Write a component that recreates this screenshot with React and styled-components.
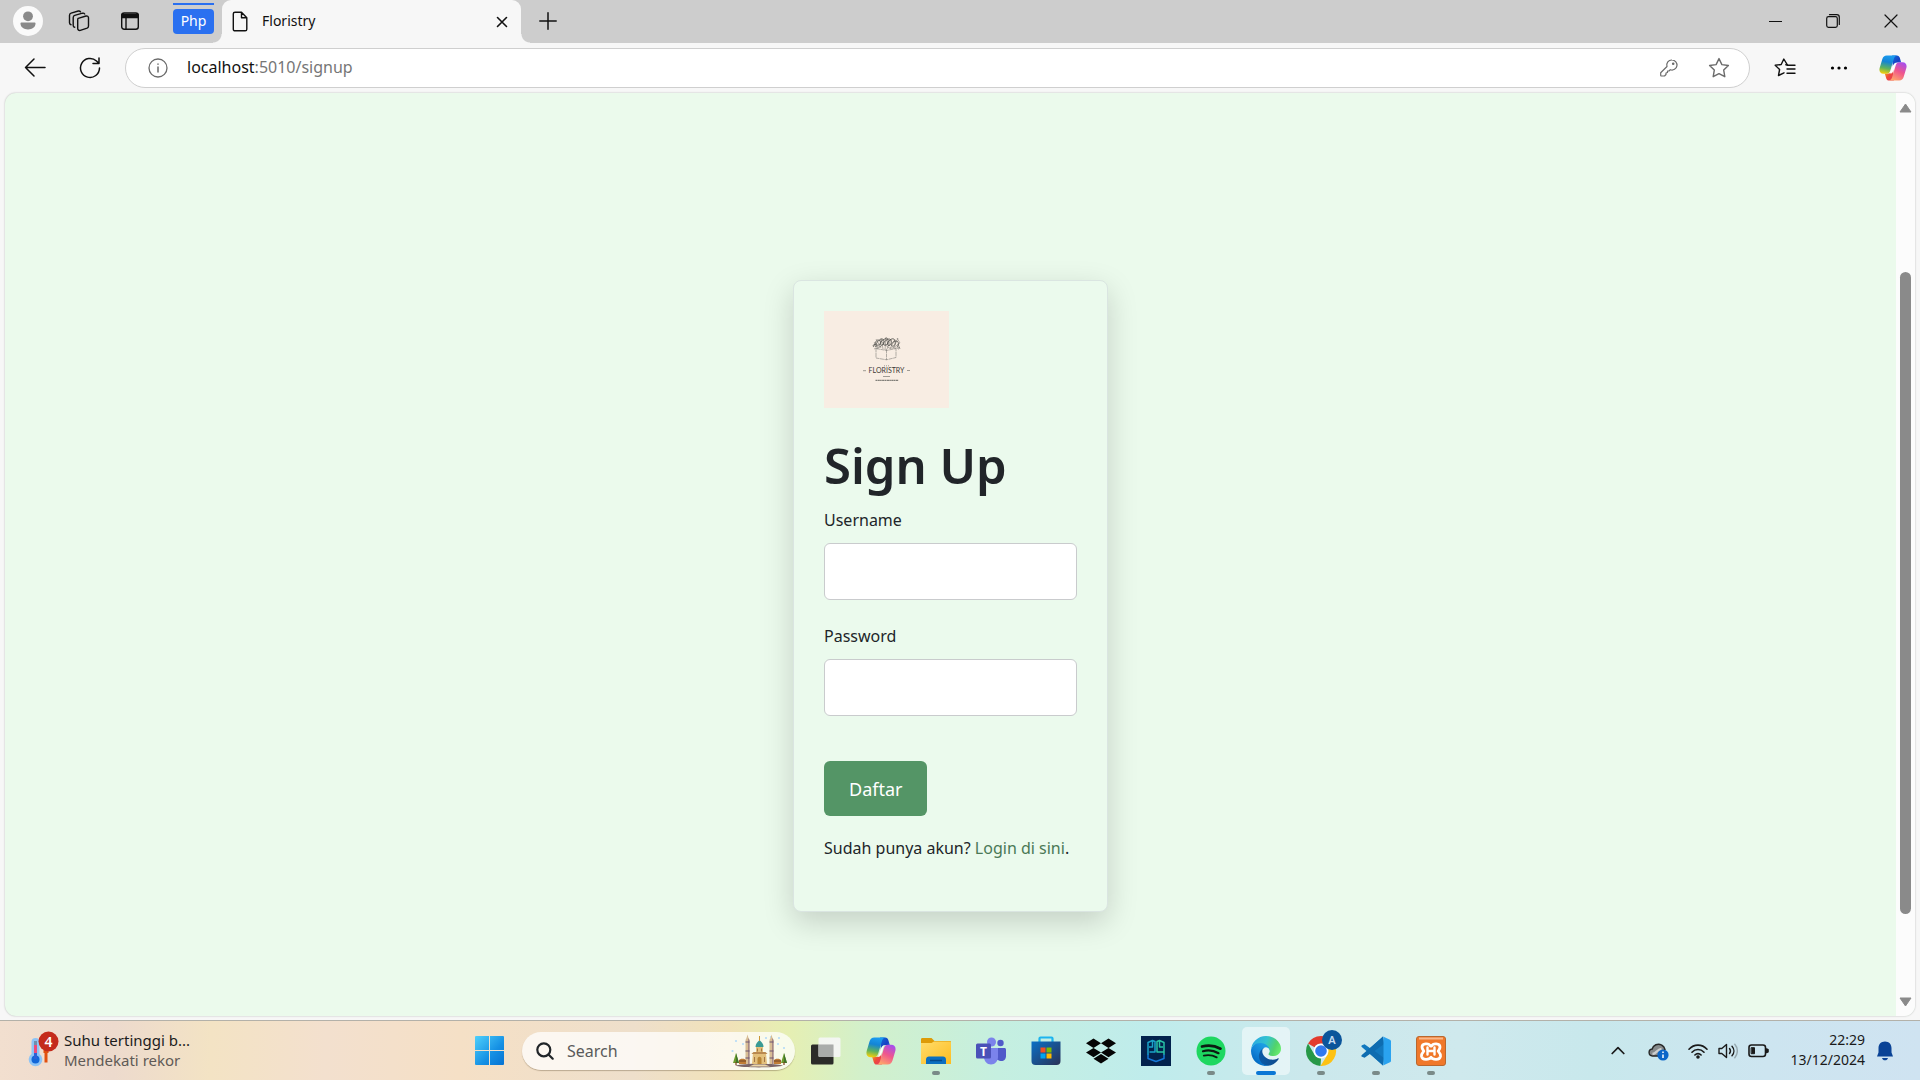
import React, { useId } from "react";
import styled, { createGlobalStyle, css } from "styled-components";

const GlobalStyle = createGlobalStyle`
  *, *::before, *::after { box-sizing: border-box; }
  body {
    margin: 0;
    font-family: "Segoe UI", "Noto Sans", "Open Sans", sans-serif;
    font-size: 16px;
    color: #212529;
  }
  button, input { font: inherit; color: inherit; }
  svg { display: block; flex: none; }
`;

const Desktop = styled.div`
  display: flex;
  flex-direction: column;
  height: 100vh;
  overflow: hidden;
  background: #f7f7f7;
`;

/* ---------- browser chrome ---------- */

const TitleBar = styled.header`
  display: flex;
  align-items: stretch;
  height: 43px;
  padding-left: 2px;
  background: #cdcdcd;
  color: #111;
`;

const BarButton = styled.button`
  display: flex;
  align-items: center;
  justify-content: center;
  width: ${(p) => p.$width || 51}px;
  height: 42px;
  padding: 0;
  border: 0;
  background: none;
`;

const TabGroup = styled.button`
  align-self: flex-start;
  width: 41px;
  height: 31px;
  margin: 3px 8px 0 18px;
  padding: 4px 0 0;
  border: 0;
  border-top: 2px solid #2a6fef;
  background: none;
`;

const TabGroupName = styled.span`
  display: block;
  height: 25px;
  border-radius: 4px;
  background: #2a70f0;
  color: #fff;
  font-size: 14px;
  line-height: 24px;
`;

const Tab = styled.div`
  position: relative;
  display: flex;
  align-items: center;
  width: 299px;
  height: 43px;
  padding: 0 8px 0 10px;
  border-radius: 9px 9px 0 0;
  background: #f7f7f7;
  font-size: 14px;

  &::before, &::after {
    content: "";
    position: absolute;
    bottom: 0;
    width: 9px;
    height: 9px;
  }
  &::before {
    right: 100%;
    background: radial-gradient(circle at 0 0, transparent 8px, #f7f7f7 9px);
  }
  &::after {
    left: 100%;
    background: radial-gradient(circle at 100% 0, transparent 8px, #f7f7f7 9px);
  }
`;

const TabTitle = styled.span`
  flex: 1;
  padding: 0 0 2px 14px;
`;

const WindowControls = styled.div`
  display: flex;
  margin-left: auto;
`;

const Toolbar = styled.nav`
  display: flex;
  align-items: center;
  height: 50px;
  padding-left: 7px;
  color: #111;
`;

const AddressBar = styled.div`
  display: flex;
  flex: 1;
  align-items: center;
  height: 40px;
  margin: 0 8px;
  padding: 0 5px 0 22px;
  border: 1px solid #cfcfcf;
  border-radius: 20px;
  background: #fff;
  color: #6b6b6b;
`;

const Url = styled.div`
  flex: 1;
  padding: 0 0 2px 19px;
  color: #767676;
`;

const Host = styled.span`
  color: #111;
`;

/* ---------- web page ---------- */

const Viewport = styled.div`
  display: flex;
  flex: 1;
  min-height: 0;
  margin: 0 5px 4px;
  border-radius: 11px;
  overflow: hidden;
  background: #ebfaec;
  box-shadow: 0 0 2px rgba(0, 0, 0, 0.28);
`;

const Page = styled.main`
  display: flex;
  flex: 1;
  align-items: flex-start;
  justify-content: center;
  padding: 187px 20px 0;
  overflow: hidden;
`;

const Card = styled.section`
  width: 315px;
  padding: 30px;
  border: 1px solid #dae5e1;
  border-radius: 8px;
  background: #ebfaed;
  box-shadow: 0 10px 30px rgba(0, 0, 0, 0.17);
`;

const Heading = styled.h1`
  margin: 27px 0 10px;
  font-size: 49px;
  font-weight: 600;
  line-height: 60px;
`;

const Field = styled.div`
  margin-bottom: 21px;
`;

const Label = styled.label`
  display: block;
  margin-bottom: 8px;
  line-height: 30px;
`;

const TextInput = styled.input`
  display: block;
  width: 100%;
  height: 57px;
  padding: 0 16px;
  border: 1px solid #c9cbcd;
  border-radius: 6px;
  background: #fff;
`;

const SubmitButton = styled.button`
  display: block;
  height: 55px;
  margin: 45px 0 17px;
  padding: 0 25px;
  border: 0;
  border-radius: 6px;
  background: #549566;
  color: #fff;
  font-size: 18px;
`;

const Note = styled.p`
  margin: 0 0 18px;
  line-height: 30px;
  white-space: nowrap;
`;

const NoteLink = styled.a`
  color: #4a7856;
  text-decoration: none;
`;

const ScrollTrack = styled.div`
  display: flex;
  flex-direction: column;
  align-items: center;
  justify-content: space-between;
  width: 19px;
  padding: 10px 0 9px;
  background: #fcfcfc;
`;

const ScrollThumb = styled.div`
  flex: 1;
  width: 11px;
  margin: 159px 0 83px;
  border-radius: 6px;
  background: #8a8a8a;
`;

/* ---------- taskbar ---------- */

const Taskbar = styled.footer`
  display: grid;
  grid-template-columns: 1fr auto 1fr;
  align-items: center;
  height: 60px;
  border-top: 1px solid #b3b1a9;
  background: linear-gradient(
    92deg,
    #f2dfcf 0%, #eddacd 6%, #f3e3c4 11%, #f3e0ce 17%, #f5e0c6 24%,
    #eedfcb 33%, #f1e2b8 38%, #e6efb2 41%, #d2f0cb 45%, #c5efe0 52%,
    #bfecec 60%, #cbe8ec 68%, #cfe9ed 76%, #c8e8ec 83%, #cde5f0 92%, #cfe3f1 100%
  );
`;

const Weather = styled.button`
  display: flex;
  align-items: center;
  justify-self: start;
  gap: 4px;
  padding: 0 0 2px 28px;
  border: 0;
  background: none;
  color: #1c1c1c;
  font-size: 15px;
  line-height: 20px;
  text-align: left;
`;

const Muted = styled.span`
  display: block;
  color: #5f5a56;
`;

const AppRow = styled.div`
  display: flex;
  align-items: center;
  gap: 7px;
`;

const SearchBox = styled.label`
  display: flex;
  align-items: center;
  width: 273px;
  height: 38px;
  margin: 0 0 0 2px;
  padding: 0 8px 0 14px;
  border-radius: 19px;
  background: rgba(255, 255, 255, 0.74);
  box-shadow: 0 1px 1px rgba(90, 70, 40, 0.35);
`;

const SearchInput = styled.input`
  flex: 1;
  min-width: 0;
  padding: 0 0 0 13px;
  border: 0;
  background: none;
  outline: 0;
  &::placeholder { color: #5a5a5a; opacity: 1; }
`;

const AppButton = styled.button`
  position: relative;
  display: flex;
  align-items: center;
  justify-content: center;
  width: 48px;
  height: 48px;
  padding: 0;
  border: 0;
  border-radius: 5px;
  background: ${(p) => (p.$active ? "rgba(255,255,255,0.5)" : "none")};

  ${(p) =>
    p.$running &&
    css`
      &::after {
        content: "";
        position: absolute;
        bottom: 0;
        width: ${p.$active ? 20 : 8}px;
        height: 4px;
        border-radius: 2px;
        background: ${p.$active ? "#0a77d5" : "#7a8a88"};
      }
    `}
`;

const Tray = styled.div`
  display: flex;
  align-items: center;
  justify-self: end;
  padding-right: 23px;
  color: #1a1a1a;
`;

const TrayButton = styled.button`
  display: flex;
  align-items: center;
  gap: 10px;
  margin-right: ${(p) => p.$after || 0}px;
  padding: 0;
  border: 0;
  background: none;
`;

const Clock = styled.time`
  width: 80px;
  margin-right: 8px;
  padding-bottom: 2px;
  font-size: 14px;
  line-height: 20px;
  text-align: right;
`;

/* ---------- drawings ---------- */

const Line = ({ w = 20, h = w, box, children, sw = 1.4, ...rest }) => (
  <svg width={w} height={h} viewBox={box || `0 0 ${w} ${h}`} fill="none" stroke="currentColor"
    strokeWidth={sw} strokeLinecap="round" strokeLinejoin="round" aria-hidden="true" {...rest}>
    {children}
  </svg>
);

const Avatar = () => (
  <svg width="30" height="34" viewBox="0 0 30 34" aria-hidden="true">
    <circle cx="15" cy="17" r="15" fill="#fafafa" />
    <circle cx="15" cy="12.300" r="4.900" fill="#8a8a8a" />
    <path d="M8.300 18.600h13.400c.5 0 .8.4.8.9 0 3.600-3.300 5.900-7.500 5.900s-7.500-2.300-7.500-5.900c0-.5.3-.9.8-.9z" fill="#8a8a8a" />
  </svg>
);

const Workspaces = () => (
  <Line w={22} h={22}>
    <path d="M10.200 8.300l7.800-2.300c1.300-.3 2.500.4 2.500 1.800v8.300c0 1-.5 1.700-1.400 2.100l-6.800 2.200c-1.300.4-2.600-.4-2.600-1.800v-8.600c0-.8.100-1.400.5-1.700z" />
    <path d="M6.700 17.300c-1-.1-1.500-.8-1.500-1.800V7.700c0-1.200.5-2 1.500-2.300l7.800-2.200c.9-.2 1.700 0 2.200.8" />
    <path d="M3 14.700c-.9-.2-1.500-.9-1.500-1.900V5.500c0-1.200.6-2 1.600-2.300L10.300 1c.9-.2 1.700 0 2.200.8" />
  </Line>
);

const TabActions = () => (
  <Line w={20}>
    <rect x="1.700" y="2" width="16.600" height="16.300" rx="2.500" />
    <path d="M2 3.500h16v3H2z" fill="currentColor" />
    <path d="M6 7v11" />
  </Line>
);

const Star = ({ lines }) => (
  <Line w={22} h={22}>
    {lines ? (
      <>
        <path d="M13.500 8.200L9.800 2 7.200 7.500l-6 .8 4.400 4.200-1.100 6 5.500-2.700" />
        <path d="M14.300 8.200L11.800 7.700M13 12h8M13.500 8.200h7.500M13 16.200h8" />
      </>
    ) : (
      <path d="M11 1.600l2.900 6 6.500.9-4.700 4.600 1.100 6.600-5.800-3.100-5.800 3.100 1.100-6.600L1.600 8.500l6.500-.9z" />
    )}
  </Line>
);

const Copilot = ({ size = 30 }) => {
  const id = useId();
  const u = (n) => `url(#${id}${n})`;
  return (
    <svg width={size} height={size} viewBox="0 0 30 30" aria-hidden="true">
      <defs>
        <linearGradient id={id + "a"} x1="0.500" y1="0" x2="0.300" y2="1">
          <stop offset="0" stopColor="#1b9cf0" /><stop offset="0.350" stopColor="#1484d5" />
          <stop offset="0.700" stopColor="#5fb35d" /><stop offset="1" stopColor="#f5cf0c" />
        </linearGradient>
        <linearGradient id={id + "b"} x1="0.800" y1="0" x2="0.300" y2="1">
          <stop offset="0" stopColor="#a44df0" /><stop offset="0.500" stopColor="#f0568c" />
          <stop offset="1" stopColor="#ffa66a" />
        </linearGradient>
        <linearGradient id={id + "c"} x1="0" y1="0" x2="1" y2="1">
          <stop offset="0" stopColor="#0e6fd8" /><stop offset="0.600" stopColor="#1840c4" /><stop offset="1" stopColor="#2d7be8" />
        </linearGradient>
        <linearGradient id={id + "d"} x1="0" y1="0" x2="1" y2="1">
          <stop offset="0" stopColor="#f5b120" /><stop offset="0.500" stopColor="#ef4b3a" /><stop offset="1" stopColor="#e3366a" />
        </linearGradient>
      </defs>
      <path d="M14 1.500h5.200c1.700 0 2.600 1 3.100 2.600L23.800 9h-4c-3 0-4 1.500-5 4z" fill={u("c")} />
      <path d="M16 28.500h-5.200c-1.700 0-2.600-1-3.100-2.600L6.200 21h4c3 0 4-1.500 5-4z" fill={u("d")} />
      <path d="M8.300 1.500h11c-2 .3-2.800 1.800-3.500 4l-3.700 12.200c-.7 2.400-1.900 3.500-4.500 3.500H4.800C1.200 21.200-.2 18.300.7 15L3.500 5.500c.9-2.800 2.300-4 4.800-4z" fill={u("a")} />
      <path d="M21.700 28.500h-11c2-.3 2.800-1.800 3.500-4l3.700-12.200c.7-2.400 1.900-3.500 4.500-3.500h2.800c3.600 0 5 2.900 4.100 6.200l-2.800 9.500c-.9 2.800-2.300 4-4.800 4z" fill={u("b")} />
      <path d="M14.800 13.500c.7-2 1.700-3.700 3.800-4.200-1 .9-1.300 2.200-1.700 3.600l-1.700 5.500c-.6 1.600-1.500 2.300-3.300 2.600.9-.9 1-1.900 1.400-3.300z" fill="#fff" fillOpacity="0.900" />
    </svg>
  );
};

const FloristryLogo = () => (
  <svg width="125" height="97" viewBox="0 0 125 97" role="img" aria-label="Floristry logo">
    <rect width="125" height="97" fill="#f8ede3" />
    <g fill="none" stroke="#63635e" strokeWidth="0.600">
      <path d="M52 37.500v9.500l10.500 1.800L72 46.500V37.500M62.500 38v11M52 37.500l10.500 2 9.500-2" strokeDasharray="4 .5" opacity="0.800" />
      <path d="M50 36c-2-1 0-4 2-2s-2 3-1-1 3-5 5-3-1 5-3 4 2-6 5-6 2 5 0 6-3-3 1-5 4-3 5 0-2 6-4 5 2-6 5-6 3 4 1 6-4-1-1-4 5-3 6 0-1 6-3 5 1-5 4-5 3 4 1 6" stroke="#484844" strokeWidth="0.800" />
      <path d="M50 31l4 5M52 28l5 9M57 27l2 11M62 26l-1 13M67 28l-4 10M71 28l-5 10M74 27l-4 9M76 32l-7 5M50 38l7-3M74 37l-9 0M53 38l7-5M73 27l3 5M61 27l5 8M56 29l9 8" stroke="#555550" opacity="0.700" />
      <path d="M74 33l2 5M76 37c-2-2-3 1-1 1" />
      <path d="M59 65.500h7" />
      <path d="M51.500 69.300h23" strokeDasharray="1.600 .4 2.300 .3" strokeWidth="1" />
      <path d="M60 54.800h5" strokeDasharray="1 1" />
      <path d="M39 59.700h3M83 59.500h3" />
    </g>
    <text x="62.500" y="62" textAnchor="middle" fontFamily="Lato, sans-serif" fontSize="7" fill="#3c3a36">FLORISTRY</text>
  </svg>
);

const ThermometerBadge = () => (
  <svg width="32" height="38" viewBox="0 0 32 38" aria-hidden="true">
    <path d="M18 20v11.500M15.500 20.500h5" stroke="#e2500f" strokeWidth="3" />
    <path d="M3.500 11a4 4 0 0 1 8 0v12a6.800 6.800 0 1 1-8 0z" fill="#8ec4f6" />
    <circle cx="7.500" cy="28.500" r="4" fill="#1266d8" />
    <path d="M7.500 28V12" stroke="#2d5fd6" strokeWidth="3" />
    <path d="M7.500 22V14" stroke="#ee4a78" strokeWidth="3" />
    <path d="M7.500 14v-4" stroke="#6f8fae" strokeWidth="3" />
    <circle cx="20.500" cy="10.500" r="10" fill="#c42b1c" />
    <text x="20.500" y="15.500" textAnchor="middle" fontSize="14" fontWeight="600" fill="#fff">4</text>
  </svg>
);

const Windows = () => (
  <svg width="29" height="29" viewBox="0 0 29 29" aria-hidden="true">
    <defs>
      <linearGradient id="win" x1="0" y1="0" x2="1" y2="1" gradientUnits="objectBoundingBox">
        <stop offset="0" stopColor="#4fd0fb" /><stop offset="0.600" stopColor="#1590e4" /><stop offset="1" stopColor="#0672d2" />
      </linearGradient>
    </defs>
    <path d="M1 0h13v14H0V1a1 1 0 0 1 1-1zM15 0h13a1 1 0 0 1 1 1v13H15zM0 15h14v14H1a1 1 0 0 1-1-1zM15 15h14v13a1 1 0 0 1-1 1H15z" fill="url(#win)" />
  </svg>
);

const tree = (x, y) => (
  <g key={x}>
    <path d={`M${x} ${y - 9}l3 10h-6z`} fill="#6a9a2c" />
    <path d={`M${x} ${y - 9}l3 10h-3z`} fill="#41752a" />
    <path d={`M${x} ${y}v3`} stroke="#7a431d" strokeWidth="1.200" />
  </g>
);

const Castle = () => (
  <svg width="56" height="34" viewBox="0 0 56 34" aria-hidden="true">
    <g fill="#b4daf8">
      {[[5, 7], [12, 10], [1.500, 17], [40, 3], [48, 4], [47, 10], [53, 14], [35, 4]].map(([x, y]) => (
        <circle key={x} cx={x} cy={y} r="1.100" />
      ))}
    </g>
    <path d="M4 31.500c10-2.500 38-2.500 48 0-6 2.500-42 2.500-48 0z" fill="#7a6468" />
    <path d="M15.500 4l1-3.500 1 3.500 1 2v24h-4V6zM39.500 4l1-3.500 1 3.500 1 2v24h-4V6z" fill="#d8bd94" />
    <path d="M17.200 4v26h1.300V6zM41.200 4v26h1.300V6z" fill="#9a7a80" />
    <path d="M14.500 8h4M14.500 17h4M38.500 8h4M38.500 17h4M14.500 24h4M38.500 24h4" stroke="#6a5470" strokeWidth="1.200" />
    <path d="M24.500 13c0-3.500 2-5 4-7 2 2 4 3.500 4 7z" fill="#3a9a94" />
    <path d="M28.500 2v5" stroke="#c99636" />
    <path d="M25 13h7v6h3l1 11H21l1-11h3z" fill="#e3c07c" />
    <path d="M20.500 20h16l-2-2h-12z" fill="#b98950" />
    <path d="M26.500 30v-5c0-3 4-3 4 0v5z" fill="#b98637" />
    <path d="M23.500 23v5M33.500 23v5M26.500 14.500v3M30.500 14.500v3" stroke="#a3764a" />
    <path d="M8 26.500c0-2.500 7-2.500 7 0V30H8zM43 26.500c0-2.500 7-2.500 7 0V30h-7z" fill="#c07c36" />
    <path d="M8 27h7M43 27h7" stroke="#6c4326" />
    <path d="M18 32.500l5-2h11l5 2z" fill="#ecd6a8" />
    {tree(5, 28)}{tree(53, 28)}
  </svg>
);

const TaskView = () => (
  <svg width="30" height="28" viewBox="0 0 30 28" aria-hidden="true">
    <rect x="0" y="7.500" width="22.500" height="20" rx="1.500" fill="#2b2b29" />
    <rect x="7.500" y="0.500" width="22" height="19.500" rx="1.500" fill="#f4f5f4" fillOpacity="0.940" />
    <path d="M7.500 7.500h15V20h-14a1 1 0 0 1-1-1z" fill="#a9acaa" />
  </svg>
);

const Folder = () => (
  <svg width="30" height="28" viewBox="0 0 30 28" aria-hidden="true">
    <defs>
      <linearGradient id="fold" x1="0" y1="0" x2="1" y2="1">
        <stop offset="0" stopColor="#ffdc6b" /><stop offset="1" stopColor="#fdbd20" />
      </linearGradient>
    </defs>
    <path d="M1.500 1h9l3 3H29a1 1 0 0 1 1 1v5H0V2.500C0 1.500.5 1 1.500 1z" fill="#dd9b08" />
    <path d="M0 6h10.500L13 4.500h16a1 1 0 0 1 1 1V27H0z" fill="url(#fold)" />
    <path d="M5 27v-4.500c0-2 1.300-3 3-3h14c1.700 0 3 1 3 3V27z" fill="#0c70c0" />
    <path d="M9 23.500h12" stroke="#054a8c" strokeWidth="1.500" />
  </svg>
);

const Teams = () => (
  <svg width="30" height="28" viewBox="0 0 30 28" aria-hidden="true">
    <circle cx="24.500" cy="6" r="3.200" fill="#5059c9" />
    <path d="M19 11h9.500c.8 0 1.500.7 1.500 1.500V19c0 3-2 5-4.500 5S19 22 19 19z" fill="#5059c9" />
    <circle cx="15.500" cy="5" r="4.500" fill="#7b83eb" />
    <path d="M8 11h14v9c0 4-3 7.500-7 7.500S8 24 8 20z" fill="#7b83eb" />
    <rect x="0" y="6.500" width="15" height="15" rx="1.500" fill="#4a51b8" />
    <text x="7.500" y="18.500" textAnchor="middle" fontSize="12" fontWeight="700" fill="#fff">T</text>
  </svg>
);

const Store = () => (
  <svg width="30" height="30" viewBox="0 0 30 30" aria-hidden="true">
    <defs>
      <linearGradient id="shop" x1="0" y1="0" x2="1" y2="1">
        <stop offset="0" stopColor="#0b6fc6" /><stop offset="1" stopColor="#2a3256" />
      </linearGradient>
    </defs>
    <path d="M8.500 6V2.500a1 1 0 0 1 1-1h11a1 1 0 0 1 1 1V6" fill="none" stroke="#1cb4ef" strokeWidth="2.200" />
    <path d="M.5 5.500h29V25a4 4 0 0 1-4 4h-21a4 4 0 0 1-4-4z" fill="url(#shop)" />
    <path d="M9.500 11.500h5v5h-5z" fill="#f25022" /><path d="M15.500 11.500h5v5h-5z" fill="#7fba00" />
    <path d="M9.500 17.500h5v5h-5z" fill="#00a4ef" /><path d="M15.500 17.500h5v5h-5z" fill="#ffb900" />
  </svg>
);

const Dropbox = () => (
  <svg width="30" height="26" viewBox="0 0 30 26" aria-hidden="true">
    <path d="M7.500.5l7.500 4.700-7.500 4.700L0 5.200zM22.500.5L30 5.200l-7.500 4.700L15 5.200zM0 14.600l7.500-4.700 7.500 4.700-7.500 4.700zM22.500 9.900l7.500 4.700-7.500 4.700-7.500-4.700zM7.500 20.800l7.500-4.700 7.500 4.700L15 25.500z" fill="#050505" />
  </svg>
);

const Monogram = () => (
  <svg width="30" height="30" viewBox="0 0 30 30" aria-hidden="true">
    <rect width="30" height="30" fill="#02224d" />
    <g fill="none" strokeWidth="1.500" strokeLinejoin="round">
      <path d="M7 19V6.500l4.500-2 2.500 1V16H8.500M11.500 5v6H8" stroke="#1aa3c9" />
      <path d="M23 19V6.500l-4.500-2-2.500 1V16h6.500M18.500 5v6H22" stroke="#29c3a6" />
      <path d="M7 18.500v4l8 3 8-3v-4" stroke="#1577d8" />
    </g>
  </svg>
);

const Spotify = () => (
  <svg width="30" height="30" viewBox="0 0 30 30" aria-hidden="true">
    <circle cx="15" cy="15" r="14.500" fill="#1ed760" />
    <g fill="none" stroke="#0c1b12" strokeLinecap="round">
      <path d="M6 10.500c6-1.600 13-.9 18.500 2.200" strokeWidth="2.700" />
      <path d="M7 15.200c5-1.300 11-.6 15.500 2" strokeWidth="2.200" />
      <path d="M7.800 19.600c4.400-1 9-.4 12.900 1.700" strokeWidth="1.900" />
    </g>
  </svg>
);

const Edge = () => (
  <svg width="30" height="30" viewBox="0 0 256 256" aria-hidden="true">
    <defs>
      <linearGradient id="e1" x1="0.200" y1="0.700" x2="1" y2="0.700"><stop offset="0" stopColor="#0c59a4" /><stop offset="1" stopColor="#114a8b" /></linearGradient>
      <linearGradient id="e2" x1="0.700" y1="0.200" x2="0.200" y2="0.900"><stop offset="0" stopColor="#1b9de2" /><stop offset="0.500" stopColor="#1383d8" /><stop offset="1" stopColor="#0067bf" /></linearGradient>
      <linearGradient id="e3" x1="0" y1="0.300" x2="1" y2="0.600"><stop offset="0" stopColor="#2aa7e4" /><stop offset="0.450" stopColor="#33c3cf" /><stop offset="0.800" stopColor="#52d36a" /><stop offset="1" stopColor="#66eb6e" /></linearGradient>
    </defs>
    <path d="M231 190.500c-3.400 1.800-6.900 3.400-10.500 4.700a101.500 101.500 0 0 1-35.900 6.500c-47.300 0-88.500-32.500-88.500-74.300a31.500 31.500 0 0 1 16.400-27.300c-42.800 1.800-53.800 46.400-53.800 72.500 0 73.900 68.100 81.400 82.800 81.400 7.900 0 19.800-2.300 27-4.600l1.300-.4a128.300 128.300 0 0 0 66.600-52.800 4 4 0 0 0-5.400-5.700z" fill="url(#e1)" />
    <path d="M105.700 241.400a79.200 79.200 0 0 1-22.700-21.300 80.700 80.700 0 0 1 29.500-120c3.200-1.500 8.500-4.100 15.600-4a32.400 32.400 0 0 1 25.700 13 31.900 31.900 0 0 1 6.300 18.700c0-.2 24.500-79.600-80-79.600-43.900 0-80 41.700-80 78.200a130.200 130.200 0 0 0 12.100 56 128 128 0 0 0 156.400 67 75.500 75.500 0 0 1-62.800-8z" fill="url(#e2)" />
    <path d="M152.300 148.900c-.9 1-3.400 2.500-3.400 5.600 0 2.600 1.700 5.100 4.700 7.200 14.400 10 41.500 8.700 41.600 8.700a59.600 59.600 0 0 0 30.300-8.300 61.400 61.400 0 0 0 30.400-52.900c.3-22.400-8-37.300-11.300-43.900C223.500 23.900 177.700 0 128 0A128 128 0 0 0 0 126.200c.5-36.500 36.800-66 80-66 3.500 0 23.500.3 42 10 16.300 8.600 24.900 18.900 30.800 29.200 6.200 10.700 7.300 24.100 7.300 29.500 0 5.300-2.700 13.300-7.800 20z" fill="url(#e3)" />
  </svg>
);

const ChromeProfile = () => (
  <svg width="42" height="42" viewBox="-6 0 42 42" aria-hidden="true">
    <path d="M15 6a15 15 0 0 1 13 7.500H15a7.500 7.500 0 0 0-6.500 3.700L2 13.500A15 15 0 0 1 15 6z" fill="#e33b2e" />
    <path d="M2 13.500l6.500 11.200a7.500 7.500 0 0 0 6.500 3.800l-.5 7.500A15 15 0 0 1 2 13.500z" fill="#279847" />
    <path d="M15 13.500h13a15 15 0 0 1-13.500 22.500l7-11.300a7.500 7.500 0 0 0-6.500-11.200z" fill="#fdc214" />
    <circle cx="15" cy="21" r="7.300" fill="#fff" /><circle cx="15" cy="21" r="5.800" fill="#3179ef" />
    <circle cx="26" cy="10" r="10" fill="#0b559b" />
    <text x="26" y="14" textAnchor="middle" fontSize="11" fontWeight="600" fill="#c6dcf2">A</text>
  </svg>
);

const VsCode = () => (
  <svg width="30" height="30" viewBox="0 0 30 30" aria-hidden="true">
    <path d="M22 .5L9.200 12.300 3.600 8.200 1 9.300c-.8.500-.8 1.200-.2 1.800L22 29.500l1-7V7z" fill="#1279bf" />
    <path d="M22 29.500L9.200 17.700l-5.600 4.100L1 20.700c-.8-.5-.8-1.200-.2-1.800L22 .500l1 7.500-9.500 7 9.500 7z" fill="#0e6cb0" />
    <path d="M22 .5l7 3.200c.7.300 1 .9 1 1.600v19.400c0 .7-.3 1.300-1 1.600l-7 3.200c.4-.5.500-1 .5-1.600V2.100c0-.6-.1-1.100-.5-1.600z" fill="#2aa3f0" />
  </svg>
);

const Xampp = () => (
  <svg width="30" height="30" viewBox="0 0 30 30" aria-hidden="true">
    <rect x="0.500" y="0.500" width="29" height="29" rx="2.500" fill="#f0782a" stroke="#b9672e" />
    <path d="M3 2.500h24" stroke="#f9b78a" strokeWidth="2" />
    <path d="M14.500 10c-1.500-3-8.500-3-8.500 1 0 1.800 1 2.800 1.800 4.200-1 1.300-2.600 2.600-2.300 5 .8 4.300 7.800 3.600 9.500 1 1.700 2.600 8.700 3.300 9.500-1 .3-2.400-1.300-3.700-2.300-5 .8-1.400 1.800-2.400 1.800-4.200 0-4-7-4-8.500-1z" fill="none" stroke="#fff" strokeWidth="2.800" strokeLinejoin="round" />
    <path d="M11.500 11.500v7M18.500 11.500v7M11.500 15h7" stroke="#fff" strokeWidth="2.400" strokeLinecap="round" />
  </svg>
);

const CloudStatus = () => (
  <svg width="21" height="20" viewBox="0 0 21 20" aria-hidden="true">
    <path d="M4.500 15c-4.500-.3-4.500-6.500-.3-7C5 4 10 2 13.500 4c2 1 3 2.500 3.500 4.500L10 15z" fill="#85898a" stroke="#262626" strokeWidth="1.400" />
    <path d="M4.500 13c4-.5 4.500-4.500 9-5" stroke="#cdcfcf" strokeWidth="2.500" fill="none" />
    <circle cx="15" cy="14" r="5.600" fill="#0b66c8" />
    <path d="M15 13.500V17M15 10.500v1.500" stroke="#fff" strokeWidth="1.500" />
  </svg>
);

const Wifi = () => (
  <Line w={20} h={16} sw={1.600}>
    <path d="M1 6.200c5-5.500 13-5.500 18 0M4 9.200c3.400-3.600 8.600-3.600 12 0M6.900 12c1.800-1.800 4.400-1.800 6.200 0" />
    <circle cx="10" cy="14" r="1" fill="currentColor" />
  </Line>
);

const Speaker = () => (
  <Line w={20} h={16}>
    <path d="M1 5.500h2.800L8.500 1.500v13L3.800 10.500H1z" />
    <path d="M11.500 5.500c1.200 1.500 1.200 3.500 0 5M14 3.300c2.500 2.800 2.500 6.600 0 9.400" />
    <path d="M16.800 1.300c3.400 4 3.400 9.400 0 13.400" opacity="0.300" />
  </Line>
);

const Battery = () => (
  <Line w={21} h={14} sw={1.600}>
    <rect x="1" y="1" width="16.500" height="11.500" rx="2.500" />
    <rect x="3.500" y="3.700" width="3" height="6" fill="currentColor" strokeWidth="1" />
    <path d="M18.500 5v3.500l1.500-.8V5.800z" fill="currentColor" />
  </Line>
);

const Bell = () => (
  <svg width="24" height="20" viewBox="0 0 24 20" aria-hidden="true">
    <path d="M12 .5c-4 0-6.500 2.800-6.500 6.500v4.500L4 15.500h16l-1.500-4V7c0-3.700-2.500-6.500-6.500-6.500zM9 17h6c-.5 1.700-1.500 2.300-3 2.300S9.500 18.700 9 17z" fill="#0a4396" />
  </svg>
);

const apps = [
  { name: "Task view", Icon: TaskView },
  { name: "Copilot", Icon: Copilot },
  { name: "File Explorer", Icon: Folder, running: true },
  { name: "Teams", Icon: Teams },
  { name: "Store", Icon: Store },
  { name: "Dropbox", Icon: Dropbox },
  { name: "PG", Icon: Monogram },
  { name: "Spotify", Icon: Spotify, running: true },
  { name: "Edge", Icon: Edge, running: true, active: true },
  { name: "Chrome", Icon: ChromeProfile, running: true },
  { name: "Visual Studio Code", Icon: VsCode, running: true },
  { name: "XAMPP", Icon: Xampp, running: true },
];

export default function App() {
  return (
    <Desktop>
      <GlobalStyle />
      <TitleBar>
        <BarButton aria-label="Profile"><Avatar /></BarButton>
        <BarButton aria-label="Workspaces"><Workspaces /></BarButton>
        <BarButton aria-label="Tab actions"><TabActions /></BarButton>
        <TabGroup><TabGroupName>Php</TabGroupName></TabGroup>
        <Tab>
          <Line w={16} h={21}>
            <path d="M3 1.200h6.500l5.300 5.500v11.500c0 1-.6 1.600-1.600 1.600H3c-1 0-1.700-.6-1.700-1.600V2.800c0-1 .7-1.600 1.700-1.600zM9.500 1.500v5.300h5" />
          </Line>
          <TabTitle>Floristry</TabTitle>
          <BarButton $width={22} aria-label="Close tab">
            <Line w={12} sw={1.600}><path d="M1.500 1.500l9 9M10.500 1.500l-9 9" /></Line>
          </BarButton>
        </Tab>
        <BarButton $width={54} aria-label="New tab">
          <Line w={18} sw={1.500}><path d="M9 .8v16.400M.8 9h16.400" /></Line>
        </BarButton>
        <WindowControls>
          <BarButton $width={58} aria-label="Minimize">
            <Line w={13} sw={1.200}><path d="M.5 6.500h12" /></Line>
          </BarButton>
          <BarButton $width={58} aria-label="Restore">
            <Line w={14} sw={1.200}>
              <rect x="0.700" y="2.700" width="10.600" height="10.600" rx="1.800" />
              <path d="M3.500.7h7.300c1.500 0 2.500 1 2.500 2.500v7.300" />
            </Line>
          </BarButton>
          <BarButton $width={58} aria-label="Close">
            <Line w={14} sw={1.200}><path d="M1 1l12 12M13 1L1 13" /></Line>
          </BarButton>
        </WindowControls>
      </TitleBar>

      <Toolbar>
        <BarButton $width={55} aria-label="Back">
          <Line w={22} sw={1.500}><path d="M21 10.500H1.500M10 2L1.500 10.500 10 19" /></Line>
        </BarButton>
        <BarButton $width={55} aria-label="Refresh">
          <Line w={22} sw={1.500}><path d="M20.500 11A9.500 9.500 0 1 1 17.500 4l2 2M20 1v5.500h-6" /></Line>
        </BarButton>
        <AddressBar>
          <Line w={20} sw={1.300}>
            <circle cx="10" cy="10" r="9" /><path d="M10 9v5M10 6v.2" strokeWidth="1.500" />
          </Line>
          <Url role="textbox" aria-label="Address" tabIndex={0}><Host>localhost</Host>:5010/signup</Url>
          <BarButton $width={50} aria-label="Saved passwords">
            <Line w={18} sw={1.200}>
              <path d="M12 1a5 5 0 1 1-1.700 9.700L9 12H7.500v1.500L6 14v1.500L4.500 17H1.500c-.5 0-.8-.3-.8-.8v-2.500L7 7.500A5 5 0 0 1 12 1z" />
              <circle cx="13.200" cy="4.800" r="0.700" />
            </Line>
          </BarButton>
          <BarButton $width={50} aria-label="Add to favorites"><Star /></BarButton>
        </AddressBar>
        <BarButton $width={54} aria-label="Favorites"><Star lines /></BarButton>
        <BarButton $width={54} aria-label="Settings and more">
          <svg width="18" height="4" viewBox="0 0 18 4" aria-hidden="true">
            <circle cx="2.500" cy="2" r="1.600" /><circle cx="9" cy="2" r="1.600" /><circle cx="15.500" cy="2" r="1.600" />
          </svg>
        </BarButton>
        <BarButton $width={54} aria-label="Copilot"><Copilot size={28} /></BarButton>
      </Toolbar>

      <Viewport>
        <Page>
          <Card>
            <FloristryLogo />
            <Heading>Sign Up</Heading>
            <form onSubmit={(e) => e.preventDefault()}>
              <Field>
                <Label htmlFor="username">Username</Label>
                <TextInput id="username" type="text" />
              </Field>
              <Field>
                <Label htmlFor="password">Password</Label>
                <TextInput id="password" type="password" />
              </Field>
              <SubmitButton type="submit">Daftar</SubmitButton>
            </form>
            <Note>Sudah punya akun? <NoteLink href="#login">Login di sini</NoteLink>.</Note>
          </Card>
        </Page>
        <ScrollTrack>
          <svg width="13" height="10" viewBox="0 0 13 10" aria-hidden="true"><path d="M6.500 1L12 9H1z" fill="#8a8a8a" stroke="#8a8a8a" strokeLinejoin="round" /></svg>
          <ScrollThumb />
          <svg width="13" height="10" viewBox="0 0 13 10" aria-hidden="true"><path d="M6.500 9L12 1H1z" fill="#8a8a8a" stroke="#8a8a8a" strokeLinejoin="round" /></svg>
        </ScrollTrack>
      </Viewport>

      <Taskbar>
        <Weather>
          <ThermometerBadge />
          <span>Suhu tertinggi b...<Muted>Mendekati rekor</Muted></span>
        </Weather>
        <AppRow>
          <AppButton aria-label="Start"><Windows /></AppButton>
          <SearchBox>
            <Line w={18} sw={2.200}><circle cx="7.800" cy="7.800" r="6.500" /><path d="M12.700 12.700l4 4" /></Line>
            <SearchInput type="text" placeholder="Search" aria-label="Search" />
            <Castle />
          </SearchBox>
          {apps.map(({ name, Icon, running, active }) => (
            <AppButton key={name} aria-label={name} $running={running} $active={active}><Icon /></AppButton>
          ))}
        </AppRow>
        <Tray>
          <TrayButton $after={23} aria-label="Show hidden icons">
            <Line w={14} h={9} sw={1.700}><path d="M1.200 7.500L7 1.700l5.800 5.800" /></Line>
          </TrayButton>
          <TrayButton $after={19} aria-label="OneDrive"><CloudStatus /></TrayButton>
          <TrayButton $after={16} aria-label="Network, sound and battery"><Wifi /><Speaker /><Battery /></TrayButton>
          <Clock>22:29<br />13/12/2024</Clock>
          <TrayButton aria-label="Notifications"><Bell /></TrayButton>
        </Tray>
      </Taskbar>
    </Desktop>
  );
}
